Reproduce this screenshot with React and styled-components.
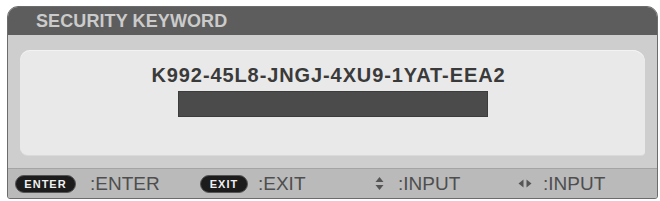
import React from "react";
import styled, { createGlobalStyle } from "styled-components";

const GlobalStyle = createGlobalStyle`
  html, body {
    margin: 0;
    padding: 0;
    background: #ffffff;
  }
  body {
    font-family: "Liberation Sans", Arial, sans-serif;
  }
`;

const Frame = styled.div`
  box-sizing: border-box;
  width: 651px;
  height: 193px;
  margin: 6px 0 0 7px;
  border: 1px solid #6c6c6c;
  border-radius: 11px 11px 3px 3px;
  overflow: hidden;
  display: flex;
  flex-direction: column;
  background: #cdcdcd;
`;

const TitleBar = styled.div`
  height: 28px;
  display: flex;
  align-items: center;
  padding-left: 28px;
  background: #5d5d5d;
  color: #cbcbcb;
  font-size: 18px;
  font-weight: bold;
  letter-spacing: 0.1px;
`;

const Body = styled.div`
  padding: 15px 12px 13px 12px;
  background: #cecece;
`;

const Panel = styled.div`
  height: 105px;
  box-sizing: border-box;
  padding-top: 13px;
  display: flex;
  flex-direction: column;
  align-items: center;
  background: #e9e9e9;
  border-radius: 10px 12px 4px 8px;
  box-shadow: inset 0 1px 0 #f3f3f3, 0 1px 0 #dadada;
`;

const Keyword = styled.div`
  font-size: 20px;
  line-height: 24px;
  font-weight: bold;
  color: #3a3a3a;
  letter-spacing: 0.9px;
  margin-right: 8px;
`;

const InputBar = styled.div`
  box-sizing: border-box;
  width: 310px;
  height: 26px;
  margin-top: 4px;
  background: #4b4b4b;
  border: 1px solid #3c3c3c;
`;

const Footer = styled.div`
  flex: 1;
  display: grid;
  grid-template-columns: 185px 175px 143px auto;
  align-items: center;
  padding-left: 7px;
  background: #bababa;
  border-top: 1px solid #a4a4a4;
`;

const Hint = styled.div`
  display: flex;
  align-items: center;
  gap: ${(p) => p.$gap}px;
`;

const Pill = styled.span`
  box-sizing: border-box;
  width: ${(p) => p.$width}px;
  height: 18px;
  border-radius: 9px;
  background: #1c1c1c;
  border: 1px solid #555;
  color: #f0f0f0;
  font-size: 11px;
  font-weight: bold;
  letter-spacing: 1px;
  display: flex;
  align-items: center;
  justify-content: center;
`;

const Label = styled.span`
  font-size: 19px;
  line-height: 20px;
  color: #4e4e4e;
`;

const Arrow = styled.svg`
  display: block;
  fill: #555555;
`;

function UpDown() {
  return (
    <Arrow width="9" height="15" viewBox="0 0 9 15">
      <polygon points="4.5,1 8.5,6 0.5,6" />
      <polygon points="0.5,9 8.5,9 4.5,14" />
    </Arrow>
  );
}

function LeftRight() {
  return (
    <Arrow width="14" height="9" viewBox="0 0 14 9">
      <polygon points="0.5,4.5 5.5,0.5 5.5,8.5" />
      <polygon points="8.5,0.5 13.5,4.5 8.5,8.5" />
    </Arrow>
  );
}

export default function App() {
  return (
    <>
      <GlobalStyle />
      <Frame>
        <TitleBar>SECURITY KEYWORD</TitleBar>
        <Body>
          <Panel>
            <Keyword>K992-45L8-JNGJ-4XU9-1YAT-EEA2</Keyword>
            <InputBar />
          </Panel>
        </Body>
        <Footer>
          <Hint $gap={14}>
            <Pill $width={61}>ENTER</Pill>
            <Label>:ENTER</Label>
          </Hint>
          <Hint $gap={10}>
            <Pill $width={48}>EXIT</Pill>
            <Label>:EXIT</Label>
          </Hint>
          <Hint $gap={14}>
            <UpDown />
            <Label>:INPUT</Label>
          </Hint>
          <Hint $gap={11}>
            <LeftRight />
            <Label>:INPUT</Label>
          </Hint>
        </Footer>
      </Frame>
    </>
  );
}
